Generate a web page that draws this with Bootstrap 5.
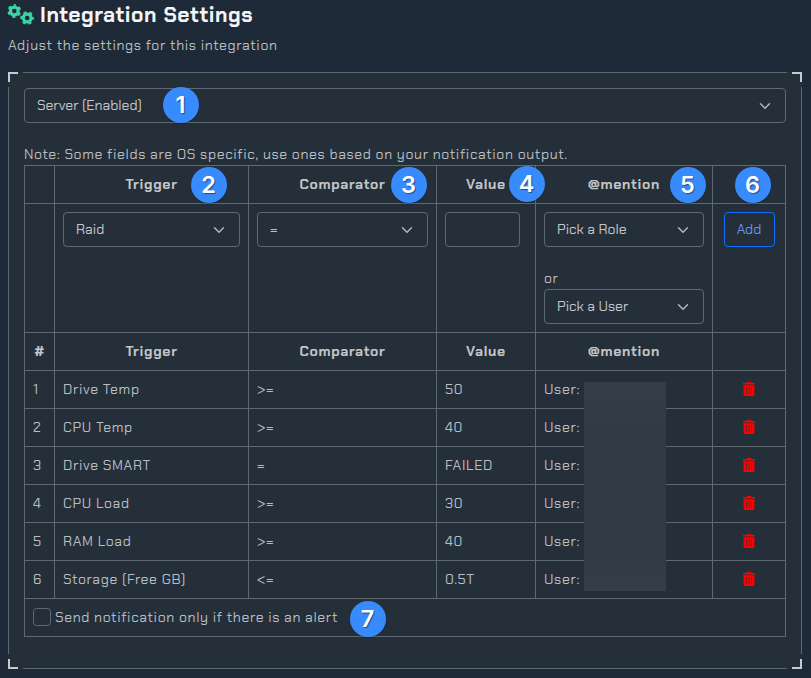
<!DOCTYPE html>
<html lang="en" data-bs-theme="dark">
<head>
<meta charset="utf-8">
<meta name="viewport" content="width=device-width, initial-scale=1">
<title>Integration Settings</title>
<link href="https://cdn.jsdelivr.net/npm/bootstrap@5.3.0/dist/css/bootstrap.min.css" rel="stylesheet">
<style>
  :root { --line: #5f6972; --ink: #b9bdc1; --panel: #242f3a; }
  body { background: #1f2a38; color: var(--ink); font: 400 14px/21px "Chakra Petch", Roboto, "Liberation Sans", sans-serif; letter-spacing: .64px; overflow: hidden; }
  .page-title { font-size: 21px; line-height: 30px; font-weight: 700; color: #f3f4f5; letter-spacing: .6px; height: 30px; }
  .gears { width: 28px; height: 24px; margin: 1px 5px 0 -1px; }
  .lede { height: 21px; margin-top: 5px; }
  .frame { height: 597px; margin-top: 16px; padding: 16px; background:
      linear-gradient(var(--line), var(--line)) 15px 0 / calc(100% - 30px) 1px no-repeat,
      linear-gradient(var(--line), var(--line)) 15px 100% / calc(100% - 30px) 1px no-repeat,
      linear-gradient(var(--line), var(--line)) 0 15px / 1px calc(100% - 30px) no-repeat,
      linear-gradient(var(--line), var(--line)) 100% 15px / 1px calc(100% - 30px) no-repeat,
      var(--panel); }
  .corner { position: absolute; width: 10px; height: 10px; border: 0 solid #c8cbce; }
  .c-tl { top: 0; left: 0; border-width: 2px 0 0 2px; }
  .c-tr { top: 0; right: 0; border-width: 2px 2px 0 0; }
  .c-bl { bottom: 0; left: 0; border-width: 0 0 2px 2px; }
  .c-br { bottom: 0; right: 0; border-width: 0 2px 2px 0; }
  .form-select, .form-control { height: 35px; padding: 6px 36px 6px 12px; font-size: 14px; line-height: 21px; color: #c3c6c9; border: 1px solid var(--line); border-radius: 4px; background-color: transparent; letter-spacing: 0;
    --bs-form-select-bg-img: url("data:image/svg+xml,%3csvg xmlns='http://www.w3.org/2000/svg' viewBox='0 0 16 16'%3e%3cpath fill='none' stroke='%23d0d3d6' stroke-linecap='round' stroke-linejoin='round' stroke-width='2' d='m2 5 6 6 6-6'/%3e%3c/svg%3e"); }
  .value-box { width: 75px; }
  .note { height: 21px; margin-top: 21px; white-space: nowrap; }
  .rules { --bs-table-bg: transparent; --bs-table-color: var(--ink); width: 762px; table-layout: fixed; border-collapse: collapse; border-color: var(--line); color: var(--ink); margin: 0; }
  .rules > tbody > tr > * { padding: 8px; border: 1px solid var(--line); position: relative; white-space: nowrap; vertical-align: top; }
  .rules tr { height: 38px; }
  .rules th { font-weight: 700; text-align: center; color: #c3c6c9; letter-spacing: .7px; }
  .rules tr.entry { height: 129px; }
  .or-label { height: 21px; margin-top: 21px; }
  .btn-add { height: 35px; width: 51px; padding: 0; font-size: 14px; border: 1px solid #0d6efd; border-radius: 4px; color: #6f8ee0; letter-spacing: 0; }
  .step { position: absolute; z-index: 3; width: 36px; height: 36px; padding-right: 1px; border-radius: 50%; background: #388bfd; color: #fff; font: 600 23.5px/36px Inter, Arial, sans-serif; letter-spacing: 0; text-align: center; text-shadow: 1px 1px 1px rgba(0,0,0,.45); box-shadow: 0 1px 1px rgba(0,0,0,.25); }
  .s1 { left: 155px; top: 15.3px; }
  .s2 { left: 136px; top: .6px; }
  .s3 { left: 142px; top: .6px; }
  .s4 { left: 72px; top: -.4px; }
  .s5 { left: 134px; top: .6px; }
  .s6 { left: 22px; top: .6px; }
  .s7 { left: 325px; top: 1.6px; }
  .redaction { position: absolute; z-index: 2; left: 48px; top: 11px; width: 82px; height: 209px; background: linear-gradient(#353e48, #313a45 20%, #303a45 80%, #353e48); }
  .trash { display: block; width: 12px; height: 14px; margin: 3px auto 0; }
  .form-check-input { width: 18px; height: 18px; margin: 1px 4px 0 0; border: 1px solid var(--line); border-radius: 4px; background-color: transparent; flex: none; }
</style>
<script src="https://cdn.jsdelivr.net/npm/bootstrap@5.3.0/dist/js/bootstrap.bundle.min.js"></script>
</head>
<body>
<svg class="d-none">
  <symbol id="bin" viewBox="0 0 12 14"><path fill="#f00" fill-rule="evenodd" d="M0 1h3.500l.7-1h3.600l.7 1H12v1.400H0zM.6 3.200h10.800V12.600q0 1.400-1.300 1.400H1.900Q.6 14 .6 12.600zM3 5v7h.6V5zM5.700 5v7h.6V5zM8.400 5v7H9V5z"/></symbol>
</svg>
<main style="padding:0 9px 0 8px">
  <h1 class="page-title d-flex m-0">
    <svg class="gears" viewBox="0 0 28 24" fill="none" stroke="#3cd2a5">
      <circle cx="7.300" cy="10" r="3.900" stroke-width="3.200"/>
      <circle cx="7.300" cy="10" r="5.700" stroke-width="2.400" stroke-dasharray="3 2.969" stroke-dashoffset="1.500" transform="rotate(-90 7.300 10)"/>
      <circle cx="20.200" cy="17" r="3.900" stroke-width="3.200"/>
      <circle cx="20.200" cy="17" r="5.700" stroke-width="2.400" stroke-dasharray="3 2.969" stroke-dashoffset="1.500"/>
    </svg>
    <span>Integration Settings</span>
  </h1>
  <p class="lede mb-0">Adjust the settings for this integration</p>
  <section class="frame position-relative">
    <i class="corner c-tl"></i><i class="corner c-tr"></i><i class="corner c-bl"></i><i class="corner c-br"></i>
    <select class="form-select" aria-label="Server"><option>Server (Enabled)</option></select>
    <span class="step s1">1</span>
    <p class="note mb-0">Note: Some fields are OS specific, use ones based on your notification output.</p>
    <table class="table table-bordered rules">
      <colgroup><col style="width:30px"><col style="width:194px"><col style="width:188px"><col style="width:99px"><col style="width:177px"><col style="width:73px"></colgroup>
      <tbody>
        <tr><th></th><th>Trigger<span class="step s2">2</span></th><th>Comparator<span class="step s3">3</span></th><th>Value<span class="step s4">4</span></th><th>@mention<span class="step s5">5</span></th><th><span class="step s6">6</span></th></tr>
        <tr class="entry">
          <td></td>
          <td><select class="form-select" aria-label="Trigger"><option>Raid</option></select></td>
          <td><select class="form-select" aria-label="Comparator"><option>=</option></select></td>
          <td><input class="form-control value-box" type="text" aria-label="Value"></td>
          <td><select class="form-select" aria-label="Role"><option>Pick a Role</option></select>
            <div class="or-label">or</div>
            <select class="form-select" aria-label="User"><option>Pick a User</option></select></td>
          <td class="text-center"><button class="btn btn-outline-primary btn-add" type="button">Add</button></td>
        </tr>
        <tr><th>#</th><th>Trigger</th><th>Comparator</th><th>Value</th><th>@mention</th><th></th></tr>
        <tr><td>1</td><td>Drive Temp</td><td>&gt;=</td><td>50</td><td>User:<span class="redaction"></span></td><td><svg class="trash"><use href="#bin"/></svg></td></tr>
        <tr><td>2</td><td>CPU Temp</td><td>&gt;=</td><td>40</td><td>User:</td><td><svg class="trash"><use href="#bin"/></svg></td></tr>
        <tr><td>3</td><td>Drive SMART</td><td>=</td><td>FAILED</td><td>User:</td><td><svg class="trash"><use href="#bin"/></svg></td></tr>
        <tr><td>4</td><td>CPU Load</td><td>&gt;=</td><td>30</td><td>User:</td><td><svg class="trash"><use href="#bin"/></svg></td></tr>
        <tr><td>5</td><td>RAM Load</td><td>&gt;=</td><td>40</td><td>User:</td><td><svg class="trash"><use href="#bin"/></svg></td></tr>
        <tr><td>6</td><td>Storage (Free GB)</td><td>&lt;=</td><td>0.5T</td><td>User:</td><td><svg class="trash"><use href="#bin"/></svg></td></tr>
        <tr><td colspan="6"><label class="d-flex"><input class="form-check-input" type="checkbox"><span>Send notification only if there is an alert</span></label><span class="step s7">7</span></td></tr>
      </tbody>
    </table>
  </section>
</main>
</body>
</html>
